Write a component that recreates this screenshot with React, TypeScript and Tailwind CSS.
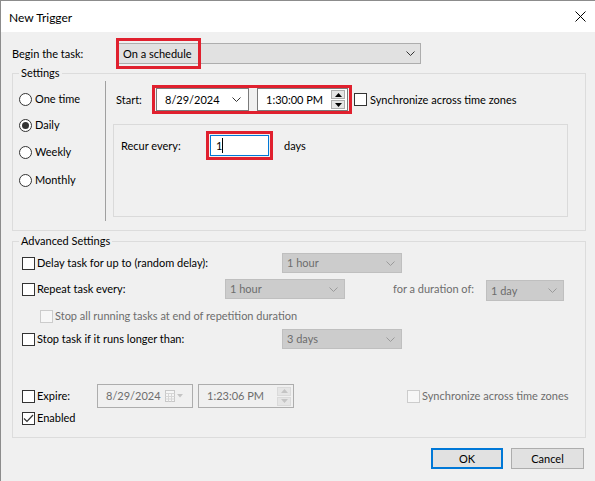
import React from "react";

const font = { fontFamily: 'Lato, "Noto Sans", sans-serif' };

function Chevron({ color = "#333333" }: { color?: string }) {
  return (
    <svg width="9" height="5" viewBox="0 0 9 5" fill="none">
      <path d="M0.5 0.5 L4.5 4.5 L8.5 0.5" stroke={color} strokeWidth="1" />
    </svg>
  );
}

function Spinner({ disabled = false }: { disabled?: boolean }) {
  const c = disabled ? "#c4c4c4" : "#000000";
  const b = disabled ? "border-[#dadada]" : "border-[#adadad]";
  return (
    <div className="flex flex-col ml-auto mr-[2px] gap-[1px]">
      <div className={`w-[14px] h-[9px] border ${b} bg-[#e5e5e5] flex items-center justify-center`}>
        <svg width="7" height="4" viewBox="0 0 7 4"><path d="M0 4 L3.5 0 L7 4 Z" fill={c} /></svg>
      </div>
      <div className={`w-[14px] h-[9px] border ${b} bg-[#e5e5e5] flex items-center justify-center`}>
        <svg width="7" height="4" viewBox="0 0 7 4"><path d="M0 0 L3.5 4 L7 0 Z" fill={c} /></svg>
      </div>
    </div>
  );
}

function Check({ checked = false, disabled = false }: { checked?: boolean; disabled?: boolean }) {
  return (
    <div
      className={`w-[13px] h-[13px] border shrink-0 flex items-center justify-center ${
        disabled ? "border-[#cccccc] bg-[#f7f7f7]" : "border-[#333333] bg-white"
      }`}
    >
      {checked && (
        <svg width="11" height="9" viewBox="0 0 11 9" fill="none">
          <path d="M1 4.5 L4 7.5 L10 1" stroke="#333333" strokeWidth="1.2" />
        </svg>
      )}
    </div>
  );
}

function Radio({ label, checked = false }: { label: string; checked?: boolean }) {
  return (
    <div className="flex items-center h-[20px]">
      <div className="w-[13px] h-[13px] rounded-full border border-[#333333] bg-white flex items-center justify-center shrink-0">
        {checked && <div className="w-[7px] h-[7px] rounded-full bg-[#333333]" />}
      </div>
      <span className="ml-[3px]">{label}</span>
    </div>
  );
}

function GrayCombo({ value, w, h = 20 }: { value: string; w: string; h?: number }) {
  return (
    <div
      className={`${w} ${h === 21 ? "h-[21px]" : "h-[20px]"} bg-[#cccccc] border border-[#bfbfbf] flex items-center pl-[4px] pr-[6px] text-[#6d6d6d]`}
    >
      <span>{value}</span>
      <span className="ml-auto">
        <Chevron color="#9a9a9a" />
      </span>
    </div>
  );
}

function Group({ title, className, children }: { title: string; className: string; children: React.ReactNode }) {
  return (
    <div className={`relative border border-[#dcdcdc] ${className}`}>
      <span className="absolute -top-[9px] left-[6px] px-[2px] bg-[#f0f0f0] leading-[16px]">{title}</span>
      {children}
    </div>
  );
}

export default function App() {
  return (
    <div
      className="w-[595px] h-[481px] bg-[#f0f0f0] border-t border-l border-[#8c8c8c] text-[11px] leading-[16px] text-black overflow-hidden whitespace-nowrap"
      style={font}
    >
      {/* title bar */}
      <div className="h-[31px] bg-white flex items-center pl-[8px] pr-[9px]">
        <span className="mt-[2px] text-[12px]">New Trigger</span>
        <svg className="ml-auto" width="11" height="11" viewBox="0 0 11 11" fill="none">
          <path d="M0.5 0.5 L10.5 10.5 M10.5 0.5 L0.5 10.5" stroke="#000" strokeWidth="1" />
        </svg>
      </div>

      <div className="pl-[11px] pr-[9px]">
        {/* Begin the task */}
        <div className="flex items-center mt-[11px] h-[21px]">
          <span className="w-[105px]">Begin the task:</span>
          <div className="relative w-[304px] h-[21px] bg-[#e1e1e1] border border-[#adadad] flex items-center pl-[5px] pr-[5px]">
            <span>On a schedule</span>
            <span className="ml-auto">
              <Chevron />
            </span>
            <div className="absolute -left-[2px] -top-[6px] w-[85px] h-[31px] border-[3px] border-[#e0202e]" />
          </div>
        </div>

        {/* Settings */}
        <Group title="Settings" className="mt-[9px] w-[574px] h-[158px]">
          <div className="flex">
            <div className="w-[92px] pl-[6px] pt-[15px] flex flex-col gap-[6px]">
              <Radio label="One time" />
              <div className="mt-[0px]">
                <Radio label="Daily" checked />
              </div>
              <div className="mt-[1px]">
                <Radio label="Weekly" />
              </div>
              <div className="mt-[2px]">
                <Radio label="Monthly" />
              </div>
            </div>
            <div className="w-[1px] h-[140px] mt-[7px] bg-[#a0a0a0]" />
            <div className="pl-[7px] pt-[11px]">
              <div className="flex items-center ml-[3px]">
                <span className="w-[36px]">Start:</span>
                <div className="flex items-center w-[200px] h-[29px] border-[3px] border-[#e0202e] pl-[1px]">
                  <div className="w-[93px] h-[23px] bg-white border border-[#7a7a7a] flex items-center pl-[8px] pr-[7px]">
                    <span>8/29/2024</span>
                    <span className="ml-auto">
                      <Chevron />
                    </span>
                  </div>
                  <div className="ml-[8px] w-[91px] h-[23px] bg-white border border-[#7a7a7a] flex items-center pl-[8px]">
                    <span>1:30:00 PM</span>
                    <Spinner />
                  </div>
                </div>
                <div className="ml-[2px]">
                  <Check />
                </div>
                <span className="ml-[3px]">Synchronize across time zones</span>
              </div>

              <div className="mt-[10px] w-[455px] h-[93px] border border-[#dadada] pl-[7px] pt-[6px]">
                <div className="flex items-center">
                  <span className="w-[85px]">Recur every:</span>
                  <div className="w-[67px] h-[29px] border-[3px] border-[#e0202e] flex items-center pl-[1px]">
                    <div className="w-[59px] h-[21px] bg-white border border-[#0078d7] flex items-center pl-[5px]">
                      <span>1</span>
                      <span className="w-[1px] h-[15px] bg-black" />
                    </div>
                  </div>
                  <span className="ml-[11px]">days</span>
                </div>
              </div>
            </div>
          </div>
        </Group>

        {/* Advanced Settings */}
        <Group title="Advanced Settings" className="mt-[10px] w-[574px] h-[197px]">
          <div className="pl-[9px] pt-[11px]">
            <div className="flex items-center h-[20px]">
              <Check />
              <span className="ml-[2px] w-[245px]">Delay task for up to (random delay):</span>
              <GrayCombo value="1 hour" w="w-[120px]" />
            </div>
            <div className="flex items-center h-[22px] mt-[5px]">
              <Check />
              <span className="ml-[2px] w-[188px]">Repeat task every:</span>
              <GrayCombo value="1 hour" w="w-[120px]" />
              <span className="ml-[48px] w-[93px] text-[#6d6d6d]">for a duration of:</span>
              <div className="mt-[3px]">
                <GrayCombo value="1 day" w="w-[78px]" h={21} />
              </div>
            </div>
            <div className="flex items-center h-[16px] mt-[8px] pl-[18px]">
              <Check disabled />
              <span className="ml-[2px] text-[#6d6d6d]">Stop all running tasks at end of repetition duration</span>
            </div>
            <div className="flex items-center h-[20px] mt-[5px]">
              <Check />
              <span className="ml-[2px] w-[245px]">Stop task if it runs longer than:</span>
              <GrayCombo value="3 days" w="w-[120px]" />
            </div>

            <div className="flex items-center h-[24px] mt-[35px]">
              <Check />
              <span className="ml-[2px] w-[60px]">Expire:</span>
              <div className="w-[96px] h-[24px] border border-[#adadad] flex items-center pl-[8px] text-[#6d6d6d]">
                <span>8/29/2024</span>
                <svg className="ml-auto mr-[8px]" width="19" height="12" viewBox="0 0 19 12" fill="none">
                  <rect x="0.5" y="0.5" width="9" height="11" fill="#f6f6f6" stroke="#c8c8c8" />
                  <path d="M0.5 3.5 H9.5 M0.5 6.5 H9.5 M0.5 9 H9.5 M3.5 3.5 V11.5 M6.5 3.5 V11.5" stroke="#d6d6d6" />
                  <path d="M12 4 L15 7.5 L18 4 Z" fill="#c4c4c4" />
                </svg>
              </div>
              <div className="ml-[5px] w-[96px] h-[24px] border border-[#adadad] flex items-center pl-[8px] text-[#6d6d6d]">
                <span>1:23:06 PM</span>
                <Spinner disabled />
              </div>
              <div className="ml-[113px]">
                <Check disabled />
              </div>
              <span className="ml-[2px] text-[#6d6d6d]">Synchronize across time zones</span>
            </div>
            <div className="flex items-center h-[16px] mt-[2px]">
              <Check checked />
              <span className="ml-[2px]">Enabled</span>
            </div>
          </div>
        </Group>

        {/* buttons */}
        <div className="flex justify-end gap-[8px] mt-[10px] w-[572px]">
          <button className="w-[72px] h-[21px] bg-[#e1e1e1] border-2 border-[#0078d7] flex items-center justify-center">
            OK
          </button>
          <button className="w-[73px] h-[21px] bg-[#e1e1e1] border border-[#adadad] flex items-center justify-center">
            Cancel
          </button>
        </div>
      </div>
    </div>
  );
}
